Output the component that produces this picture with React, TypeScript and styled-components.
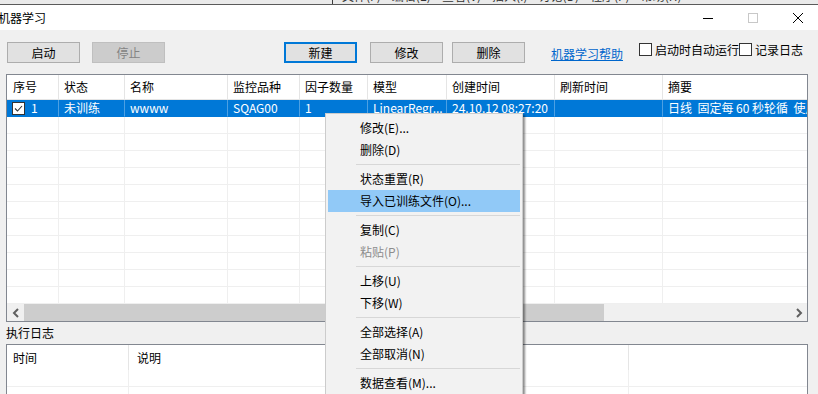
import React from 'react';
import styled, { createGlobalStyle } from 'styled-components';

const font = `"Noto Sans CJK SC", "Noto Sans", sans-serif`;

const GlobalStyle = createGlobalStyle`
  html, body {
    margin: 0;
    padding: 0;
    background: #f0f0f0;
  }
  body {
    font-family: ${font};
    font-size: 12px;
    color: #000;
  }
  * {
    box-sizing: border-box;
  }
`;

const mainCols = [52, 66, 103, 72, 68, 79, 108, 108, 300];
const logCols = [122, 500, 300];

const headers = ['序号', '状态', '名称', '监控品种', '因子数量', '模型', '创建时间', '刷新时间', '摘要'];
const firstRow = ['1', '未训练', 'wwww', 'SQAG00', '1', 'LinearRegr...', '24.10.12 08:27:20', '', '日线  固定每 60 秒轮循  使用'];

const backMenu = ['文件(F)', '编辑(E)', '查看(V)', '插入(I)', '讨论(D)', '程序(P)', '帮助(H)'];

type MenuEntry = { label?: string; active?: boolean; disabled?: boolean; sep?: boolean };

const menu: MenuEntry[] = [
  { label: '修改(E)...' },
  { label: '删除(D)' },
  { sep: true },
  { label: '状态重置(R)' },
  { label: '导入已训练文件(O)...', active: true },
  { sep: true },
  { label: '复制(C)' },
  { label: '粘贴(P)', disabled: true },
  { sep: true },
  { label: '上移(U)' },
  { label: '下移(W)' },
  { sep: true },
  { label: '全部选择(A)' },
  { label: '全部取消(N)' },
  { sep: true },
  { label: '数据查看(M)...' },
  { label: '导出数据(X)...' },
];

const cols = (list: number[]) => list.map((w) => `${w}px`).join(' ');

const App: React.FunctionComponent = () => {
  return (
    <>
      <GlobalStyle />
      <Screen>
        <BackWindow>
          <BackDivider />
          <BackMenu>
            {backMenu.map((m) => (
              <span key={m}>{m}</span>
            ))}
          </BackMenu>
        </BackWindow>

        <TitleBar>
          <Title>机器学习</Title>
          <WinControls>
            <WinButton>
              <svg width="10" height="10" viewBox="0 0 10 10">
                <path d="M0 5.5h10" stroke="#000" strokeWidth="1" />
              </svg>
            </WinButton>
            <WinButton>
              <svg width="10" height="10" viewBox="0 0 10 10">
                <rect x="0.5" y="0.5" width="9" height="9" fill="none" stroke="#c8c8c8" />
              </svg>
            </WinButton>
            <WinButton>
              <svg width="10" height="10" viewBox="0 0 10 10">
                <path d="M0 0L10 10M10 0L0 10" stroke="#000" strokeWidth="1" />
              </svg>
            </WinButton>
          </WinControls>
        </TitleBar>

        <Body>
          <Toolbar>
            <Button $ml={1}>启动</Button>
            <Button $ml={12} disabled>
              停止
            </Button>
            <Button $ml={119} $primary>
              新建
            </Button>
            <Button $ml={13}>修改</Button>
            <Button $ml={9}>删除</Button>
            <HelpLink>机器学习帮助</HelpLink>
            <CheckLabel $ml={16}>
              <Box />
              启动时自动运行
            </CheckLabel>
            <CheckLabel $ml={0}>
              <Box />
              记录日志
            </CheckLabel>
          </Toolbar>

          <ListFrame>
            <Viewport>
              <GridRow $cols={cols(mainCols)}>
                {headers.map((h, i) => (
                  <HeadCell key={h} $first={i === 0}>
                    {h}
                  </HeadCell>
                ))}
              </GridRow>
              <GridRow $cols={cols(mainCols)}>
                {firstRow.map((c, i) => (
                  <Cell key={i} $selected $first={i === 0}>
                    {i === 0 && (
                      <RowCheck>
                        <svg width="11" height="11" viewBox="0 0 11 11">
                          <path d="M2 5.5l2.5 2.5 4.5-5" fill="none" stroke="#333" strokeWidth="1.1" />
                        </svg>
                      </RowCheck>
                    )}
                    {c}
                  </Cell>
                ))}
              </GridRow>
              {Array.from({ length: 11 }).map((_, r) => (
                <GridRow key={r} $cols={cols(mainCols)}>
                  {mainCols.map((_, i) => (
                    <Cell key={i} $first={i === 0} />
                  ))}
                </GridRow>
              ))}
            </Viewport>
            <HScroll>
              <ScrollArrow>
                <svg width="8" height="10" viewBox="0 0 8 10">
                  <path d="M6 1L2 5l4 4" fill="none" stroke="#606060" strokeWidth="2" />
                </svg>
              </ScrollArrow>
              <Thumb />
              <ScrollTrack />
              <ScrollArrow>
                <svg width="8" height="10" viewBox="0 0 8 10">
                  <path d="M2 1l4 4-4 4" fill="none" stroke="#606060" strokeWidth="2" />
                </svg>
              </ScrollArrow>
            </HScroll>
          </ListFrame>

          <SectionLabel>执行日志</SectionLabel>

          <LogFrame>
            <GridRow $cols={cols(logCols)}>
              <LogHead>时间</LogHead>
              <LogHead $pad={8}>说明</LogHead>
              <LogHead $last />
            </GridRow>
            {Array.from({ length: 2 }).map((_, r) => (
              <GridRow key={r} $cols={cols(logCols)}>
                {logCols.map((_, i) => (
                  <Cell key={i} />
                ))}
              </GridRow>
            ))}
          </LogFrame>
        </Body>

        <ContextMenu>
          {menu.map((m, i) =>
            m.sep ? (
              <MenuSep key={i} />
            ) : (
              <MenuItem key={i} $active={m.active} $disabled={m.disabled}>
                {m.label}
              </MenuItem>
            )
          )}
        </ContextMenu>
      </Screen>
    </>
  );
};

const Screen = styled.div`
  position: relative;
  width: 818px;
  height: 394px;
  overflow: hidden;
  background: #f0f0f0;
`;

const BackWindow = styled.div`
  display: flex;
  height: 5px;
  padding-left: 332px;
  overflow: hidden;
  background: #eaeaea;
  border-bottom: 1px solid #5a5a5a;
`;

const BackDivider = styled.div`
  width: 1px;
  height: 4px;
  background: #3c3c3c;
`;

const BackMenu = styled.div`
  display: flex;
  gap: 11px;
  margin-top: -12px;
  padding-left: 9px;
  line-height: 16px;
  font-size: 12px;
  color: #333;
  white-space: nowrap;
`;

const TitleBar = styled.div`
  display: flex;
  align-items: center;
  height: 25px;
  background: #fff;
`;

const Title = styled.div`
  flex: 1;
  margin-left: -2px;
  font-size: 12px;
  line-height: 16px;
`;

const WinControls = styled.div`
  display: flex;
  margin-right: -2px;
`;

const WinButton = styled.div`
  display: flex;
  align-items: center;
  justify-content: center;
  width: 45px;
  height: 25px;
`;

const Body = styled.div`
  padding: 12px 10px 0 6px;
`;

const Toolbar = styled.div`
  display: flex;
  align-items: flex-start;
  height: 21px;
`;

const Button = styled.button<{ $ml: number; $primary?: boolean }>`
  width: 73px;
  height: 21px;
  margin: 0 0 0 ${({ $ml }) => $ml}px;
  padding: 0;
  font-family: ${font};
  font-size: 12px;
  line-height: 17px;
  color: #000;
  background: #e1e1e1;
  border: ${({ $primary }) => ($primary ? '2px solid #0078d7' : '1px solid #adadad')};

  &:disabled {
    color: #838383;
    background: #cccccc;
    border-color: #bfbfbf;
  }
`;

const HelpLink = styled.a`
  margin: 4px 0 0 26px;
  font-size: 12px;
  line-height: 16px;
  color: #0066cc;
  text-decoration: underline;
  white-space: nowrap;
`;

const CheckLabel = styled.label<{ $ml: number }>`
  display: flex;
  align-items: center;
  gap: 3px;
  height: 13px;
  margin: 1px 0 0 ${({ $ml }) => $ml}px;
  font-size: 12px;
  line-height: 13px;
  white-space: nowrap;
`;

const Box = styled.span`
  width: 13px;
  height: 13px;
  flex: none;
  background: #fff;
  border: 1px solid #333;
`;

const ListFrame = styled.div`
  margin-top: 11px;
  width: 802px;
  border: 1px solid #828790;
  background: #fff;
`;

const Viewport = styled.div`
  width: 800px;
  overflow: hidden;
`;

const GridRow = styled.div<{ $cols: string }>`
  display: grid;
  grid-template-columns: ${({ $cols }) => $cols};
`;

const HeadCell = styled.div<{ $first?: boolean }>`
  height: 25px;
  padding-left: ${({ $first }) => ($first ? 6 : 5)}px;
  font-size: 12px;
  line-height: 24px;
  white-space: nowrap;
  overflow: hidden;
  border-right: 1px solid #e5e5e5;
  border-bottom: 1px solid #e5e5e5;
`;

const Cell = styled.div<{ $selected?: boolean; $first?: boolean }>`
  display: flex;
  align-items: center;
  gap: 6px;
  height: 17px;
  padding-left: 5px;
  font-size: 12px;
  line-height: 16px;
  white-space: pre;
  overflow: hidden;
  color: ${({ $selected }) => ($selected ? '#fff' : '#000')};
  background: ${({ $selected }) => ($selected ? '#0078d7' : '#fff')};
  border-right: 1px solid ${({ $selected }) => ($selected ? 'rgba(255,255,255,0.3)' : '#efefef')};
  border-bottom: 1px solid ${({ $selected }) => ($selected ? '#0078d7' : '#efefef')};
`;

const RowCheck = styled.span`
  display: flex;
  align-items: center;
  justify-content: center;
  width: 13px;
  height: 13px;
  flex: none;
  background: #fff;
  border: 1px solid #333;
`;

const HScroll = styled.div`
  display: flex;
  height: 17px;
  background: #f0f0f0;
`;

const ScrollArrow = styled.div`
  display: flex;
  align-items: center;
  justify-content: center;
  width: 17px;
  height: 17px;
`;

const Thumb = styled.div`
  width: 580px;
  background: #cdcdcd;
`;

const ScrollTrack = styled.div`
  flex: 1;
`;

const SectionLabel = styled.div`
  height: 22px;
  font-size: 12px;
  line-height: 22px;
`;

const LogFrame = styled.div`
  width: 802px;
  height: 60px;
  overflow: hidden;
  border: 1px solid #828790;
  border-bottom: none;
  background: #fff;
`;

const LogHead = styled.div<{ $pad?: number; $last?: boolean }>`
  height: 25px;
  padding-left: ${({ $pad }) => $pad ?? 6}px;
  font-size: 12px;
  line-height: 25px;
  border-right: ${({ $last }) => ($last ? 'none' : '1px solid #e5e5e5')};
`;

const ContextMenu = styled.div`
  position: absolute;
  left: 325px;
  top: 113px;
  width: 198px;
  padding: 3px 2px;
  background: #f2f2f2;
  border: 1px solid #cccccc;
  box-shadow: 2px 2px 2px rgba(0, 0, 0, 0.45);
`;

const MenuItem = styled.div<{ $active?: boolean; $disabled?: boolean }>`
  height: 22px;
  padding-left: 32px;
  font-size: 12px;
  line-height: 22px;
  white-space: nowrap;
  color: ${({ $disabled }) => ($disabled ? '#8d8d8d' : '#000')};
  background: ${({ $active }) => ($active ? '#91c9f7' : 'transparent')};
`;

const MenuSep = styled.div`
  height: 1px;
  margin: 3px 0 3px 28px;
  background: #d7d7d7;
`;

export default App;
